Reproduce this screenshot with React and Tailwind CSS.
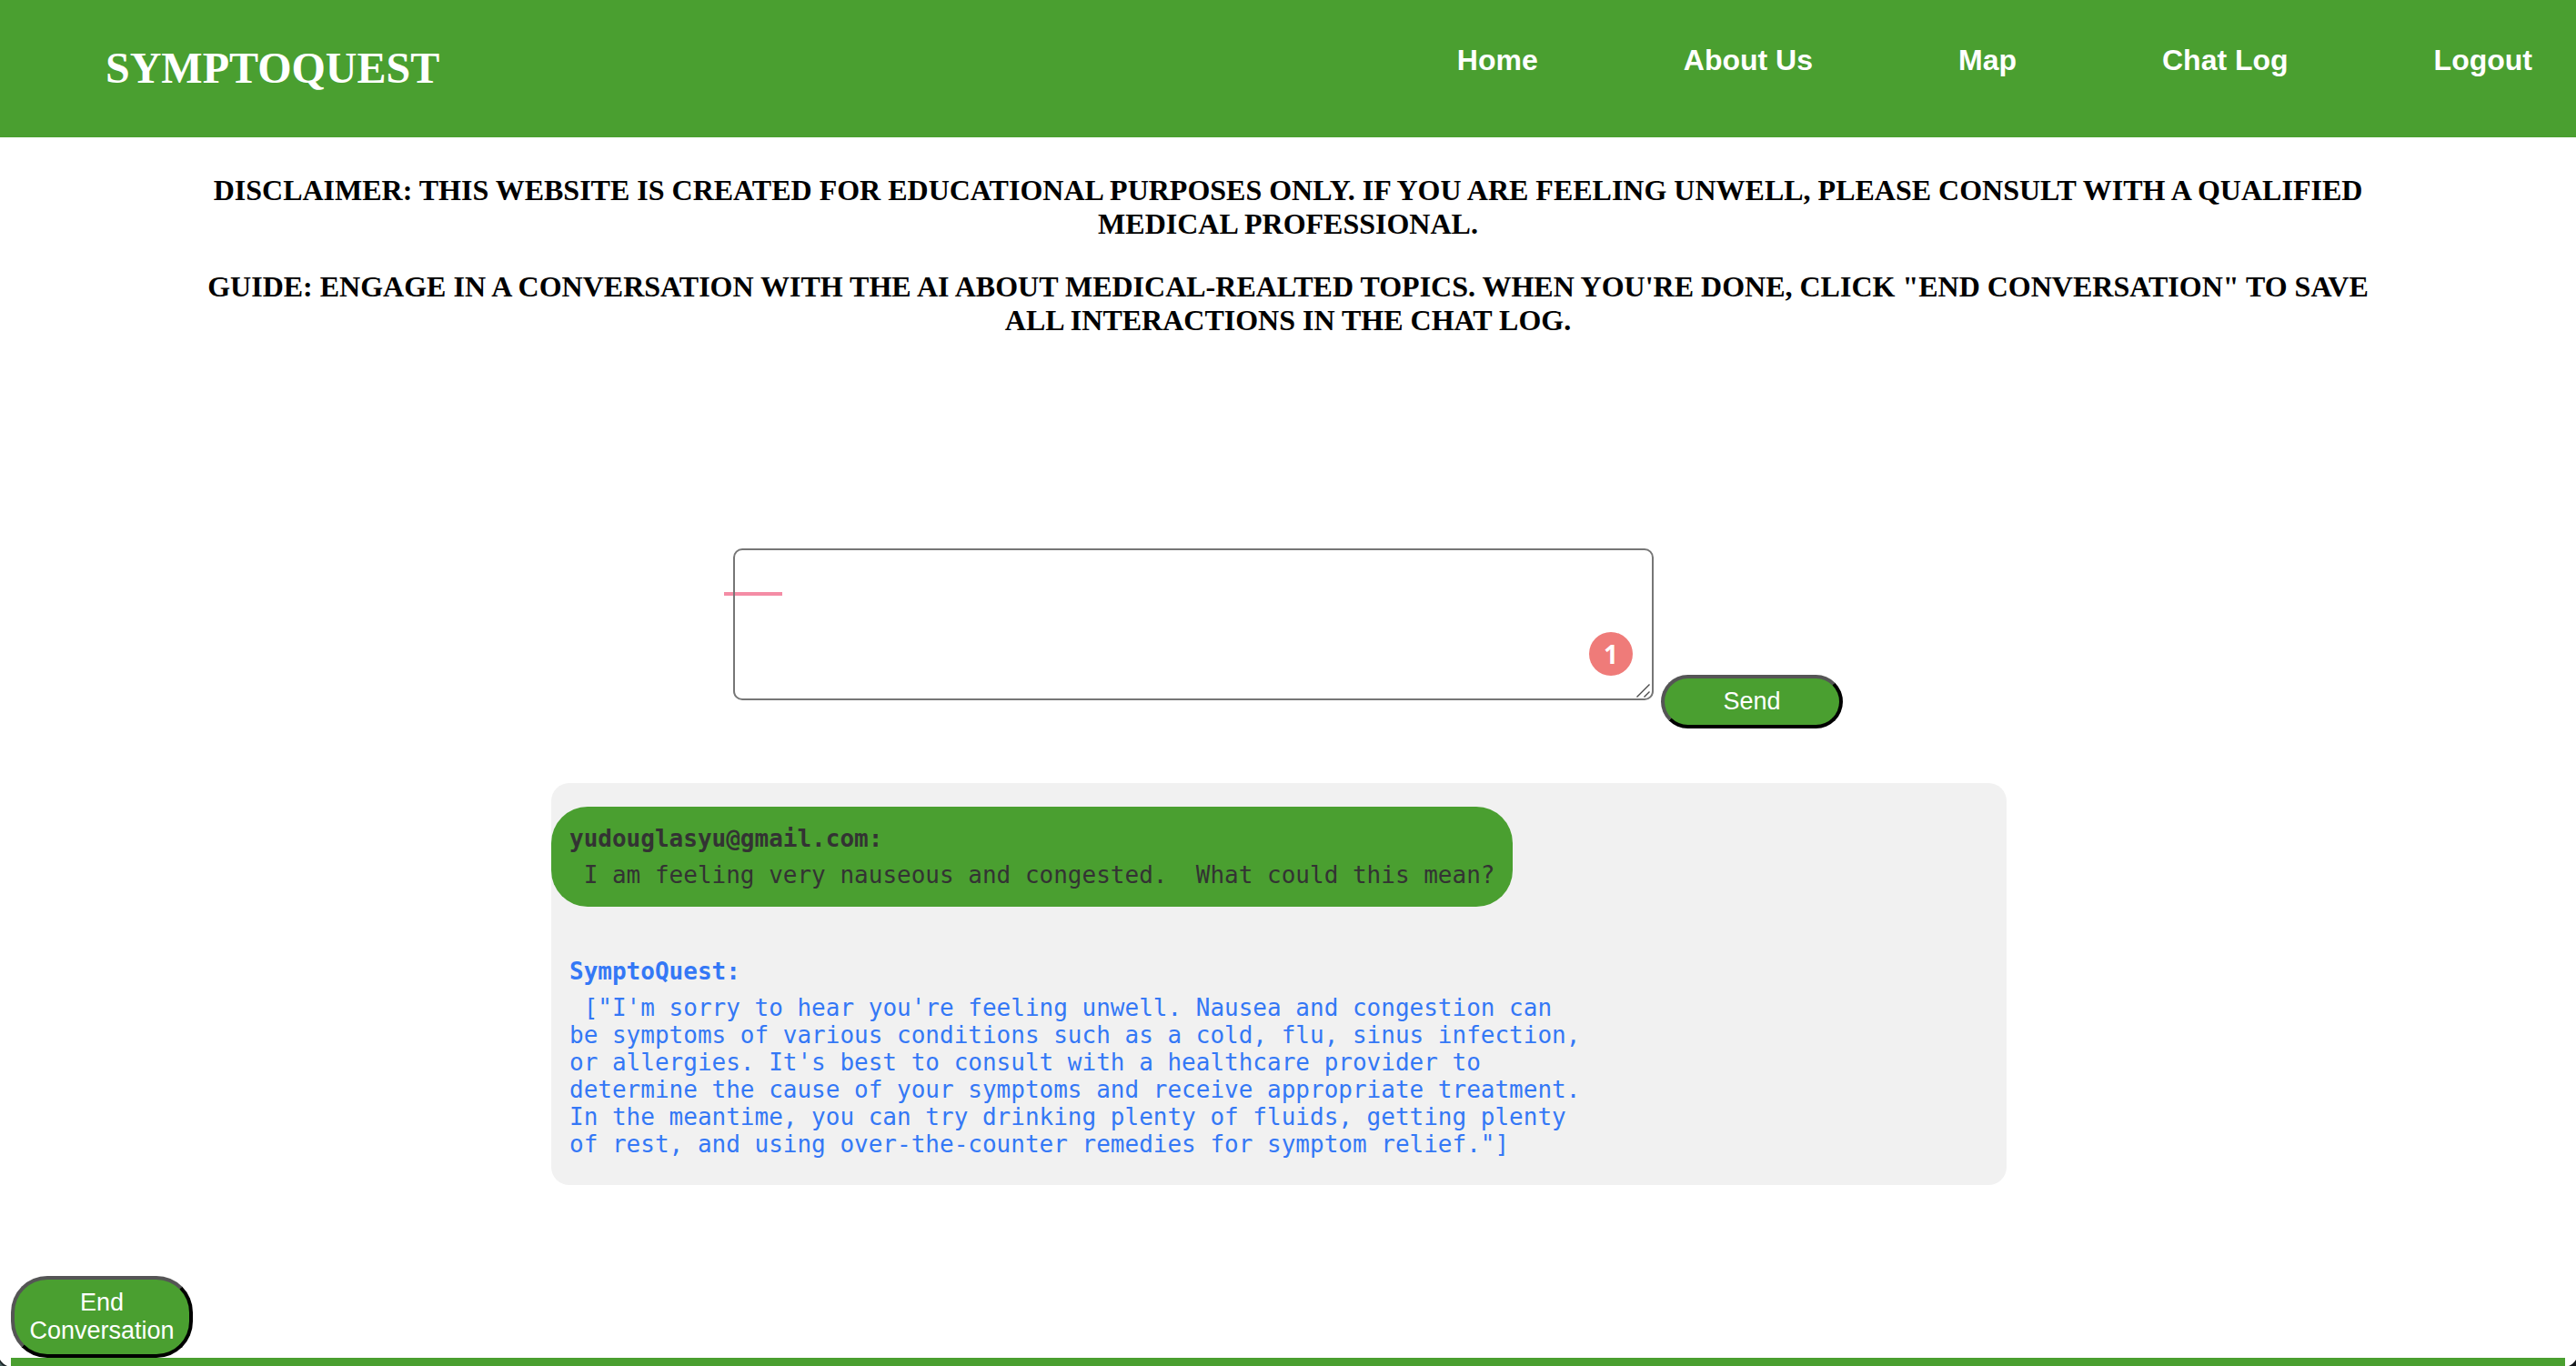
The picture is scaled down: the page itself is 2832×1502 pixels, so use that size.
const links = ["Home", "About Us", "Map", "Chat Log", "Logout"];

function PillButton({ children }) {
  return (
    <button
      type="button"
      className="w-[200px] shrink-0 rounded-[40px] border-4 border-t-[#555] border-r-black border-b-black border-l-[#555] bg-[#4a9f30] px-3 py-[10px] text-center font-['Liberation_Sans',Arial,sans-serif] text-[27px] leading-[31px] text-white"
    >
      {children}
    </button>
  );
}

function Header() {
  return (
    <header className="flex h-[151px] items-start justify-between bg-[#4a9f30] pr-12 pl-[116px] text-white">
      <h1 className="pt-12 text-[48px] leading-[54px] font-bold">SYMPTOQUEST</h1>
      <nav className="flex gap-[160px] pt-12 font-['Liberation_Sans',Arial,sans-serif] text-[32px] leading-[36px] font-bold">
        {links.map((label) => (
          <a key={label} href="#">
            {label}
          </a>
        ))}
      </nav>
    </header>
  );
}

function Composer() {
  return (
    <form className="mt-[232px] flex items-end justify-center gap-2">
      <div className="relative mb-[31px] w-full max-w-[1012px]">
        <span className="absolute top-12 -left-[10px] h-1 w-16 bg-[#f48ca5]" />
        <textarea
          aria-label="Message"
          className="relative block h-[167px] w-full resize-none rounded-[10px] border-2 border-[#767676] bg-transparent p-4 text-[27px]"
        />
        <span className="absolute right-[23px] bottom-[27px] flex size-12 items-center justify-center rounded-full bg-[#ef7b79] font-['Open_Sans',sans-serif] text-[28px] leading-none font-bold text-white">
          1
        </span>
        <svg className="absolute right-1 bottom-[3px]" width="15" height="15" viewBox="0 0 15 15" fill="none" stroke="#4a4a4a" strokeWidth="1.4" aria-hidden="true">
          <path d="M0.5 14.5 14.5 0.5M8.5 14.5 14.5 8.5" />
        </svg>
      </div>
      <PillButton>Send</PillButton>
    </form>
  );
}

function Chat() {
  return (
    <div className="mt-[60px] pr-5">
      <section className="mx-auto w-full max-w-[1600px] rounded-[20px] bg-[#f1f1f1] pt-[26px] pb-[10px] font-['DejaVu_Sans_Mono',Menlo,monospace] text-[26px] leading-[30px]">
        <div className="w-fit rounded-[40px] bg-[#4a9f30] p-5 text-[#333]">
          <strong className="block">yudouglasyu@gmail.com:</strong>
          <p className="mt-[10px] whitespace-pre-wrap">{" I am feeling very nauseous and congested.  What could this mean?"}</p>
        </div>
        <div className="mt-9 w-full max-w-[1160px] p-5 text-[#3478f6]">
          <strong className="block">SymptoQuest:</strong>
          <p className="mt-[10px] whitespace-pre-wrap">
            {
              " [\"I'm sorry to hear you're feeling unwell. Nausea and congestion can be symptoms of various conditions such as a cold, flu, sinus infection, or allergies. It's best to consult with a healthcare provider to determine the cause of your symptoms and receive appropriate treatment. In the meantime, you can try drinking plenty of fluids, getting plenty of rest, and using over-the-counter remedies for symptom relief.\"]"
            }
          </p>
        </div>
      </section>
    </div>
  );
}

export default function App() {
  return (
    <div className="relative flex h-screen flex-col overflow-hidden bg-white font-['Liberation_Serif','Times_New_Roman',serif] text-black">
      <Header />
      <div className="px-[200px] pt-10 text-center text-[32px] leading-[37px] font-bold">
        <h3>
          DISCLAIMER: THIS WEBSITE IS CREATED FOR EDUCATIONAL PURPOSES ONLY. IF YOU ARE FEELING UNWELL, PLEASE CONSULT WITH A
          QUALIFIED MEDICAL PROFESSIONAL.
        </h3>
        <h3 className="mt-8">
          GUIDE: ENGAGE IN A CONVERSATION WITH THE AI ABOUT MEDICAL-REALTED TOPICS. WHEN YOU'RE DONE, CLICK "END CONVERSATION"
          TO SAVE ALL INTERACTIONS IN THE CHAT LOG.
        </h3>
      </div>
      <Composer />
      <Chat />
      <div className="mt-[100px] flex flex-1 flex-col items-start px-3">
        <PillButton>End Conversation</PillButton>
        <footer className="w-full flex-1 bg-[#4a9f30]" />
      </div>
      <svg className="absolute bottom-0 left-0" width="8" height="7" viewBox="0 0 8 7" aria-hidden="true">
        <path d="M0 0Q3 5 8 7H0Z" fill="#1c2627" />
        <path d="M0 3Q2 6 4 7H0Z" fill="#49605f" />
      </svg>
      <svg className="absolute right-0 bottom-0" width="8" height="7" viewBox="0 0 8 7" aria-hidden="true">
        <path d="M8 0Q5 5 0 7H8Z" fill="#14171a" />
      </svg>
    </div>
  );
}
